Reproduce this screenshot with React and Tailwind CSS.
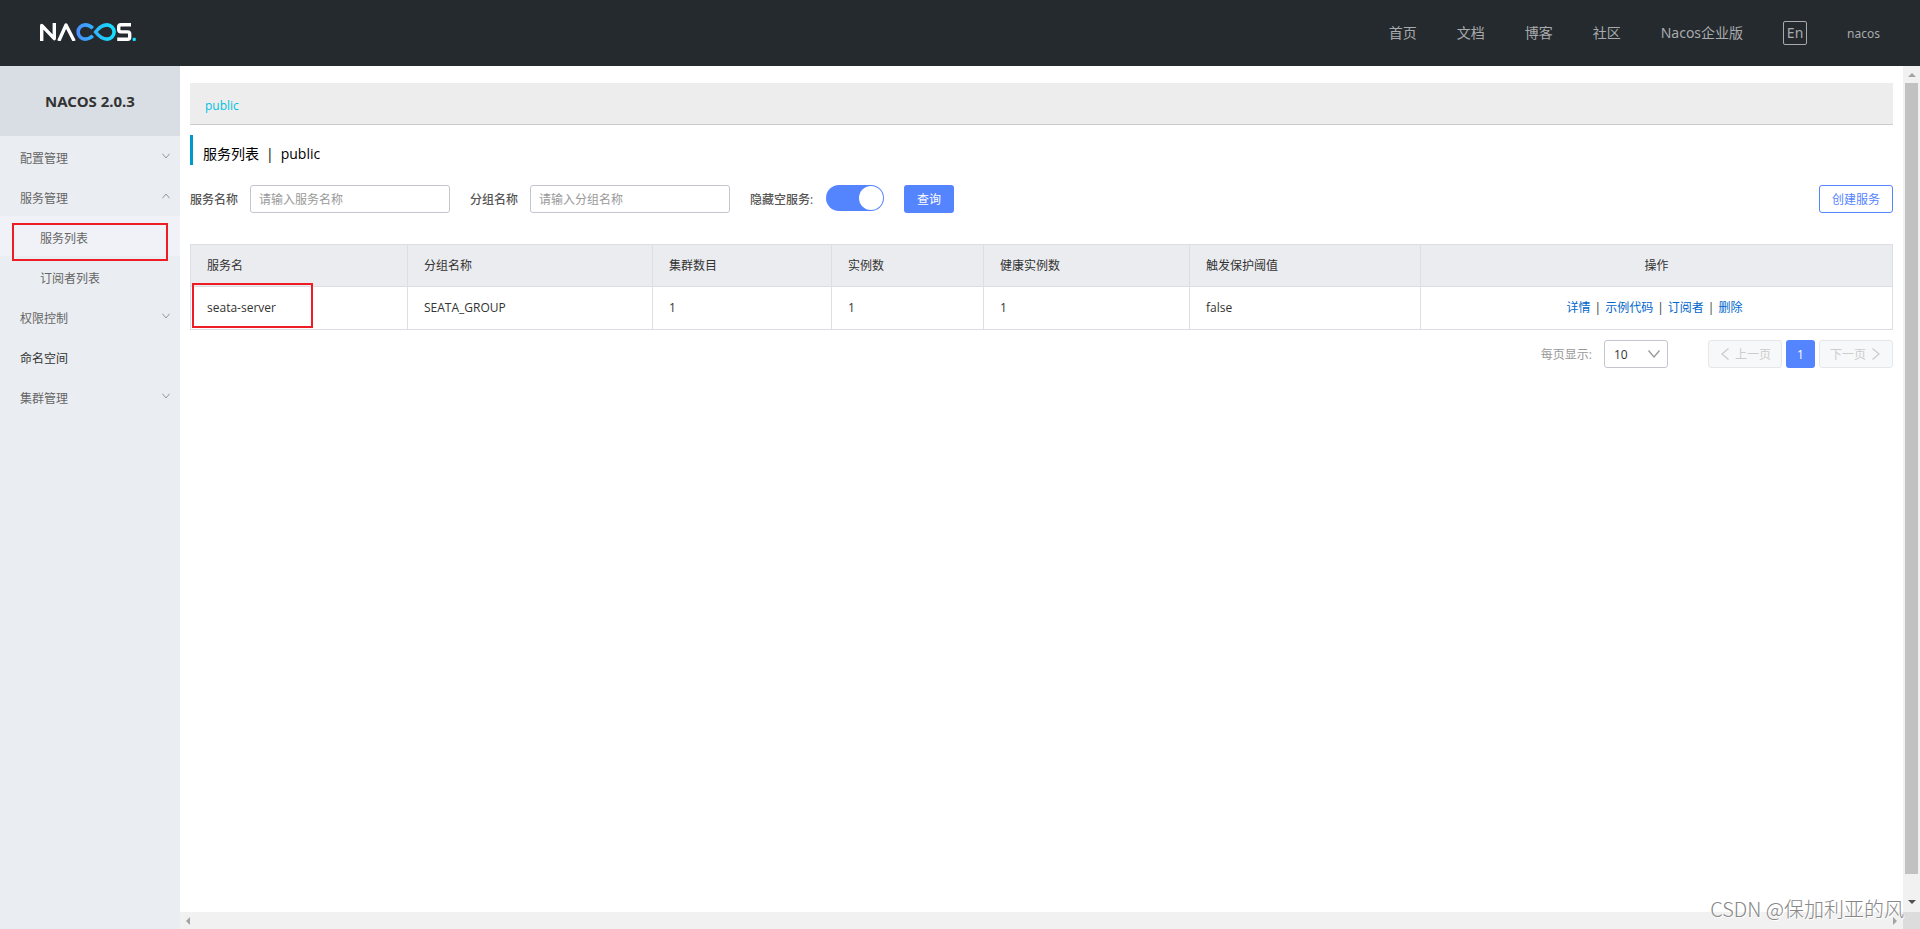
import React, { useState } from "react";

const NAV = ["首页", "文档", "博客", "社区", "Nacos企业版"];

const COLUMNS = [
  { label: "服务名", width: "w-[217px]" },
  { label: "分组名称", width: "w-[245px]" },
  { label: "集群数目", width: "w-[179px]" },
  { label: "实例数", width: "w-[152px]" },
  { label: "健康实例数", width: "w-[206px]" },
  { label: "触发保护阈值", width: "w-[231px]" },
];

const ROWS = [["seata-server", "SEATA_GROUP", "1", "1", "1", "false"]];

const ACTIONS = ["详情", "示例代码", "订阅者", "删除"];

function Logo() {
  return (
    <svg viewBox="0 0 96 18" className="mb-0.5 h-[18px] w-24" fill="none" role="img" aria-label="Nacos">
      <defs>
        <linearGradient id="loop" x1="36" y1="0" x2="76" y2="0" gradientUnits="userSpaceOnUse">
          <stop offset="0" stopColor="#4a8cff" />
          <stop offset="1" stopColor="#12e4ff" />
        </linearGradient>
      </defs>
      <g stroke="#fff" strokeWidth="3.4" strokeLinejoin="round">
        <path d="M1.7 18V2.4L14.3 15.6V0" />
        <path d="M18.8 18L26 2L34.2 18" />
        <path d="M91 1.7H81Q78.7 1.7 78.7 4V6.6Q78.7 8.9 81 8.9H87.6Q89.7 8.9 89.7 11V14Q89.7 16.3 87.6 16.3H77.2" />
      </g>
      <g stroke="url(#loop)" strokeWidth="3.6">
        <path d="M52.8 5.2Q49.4 1.9 45.2 1.9A7.1 7.1 0 0 0 45.2 16.1Q49.4 16.1 52.8 12.8" />
        <path d="M55.6 9Q61 1.9 67 1.9A7.1 7.1 0 0 1 67 16.1Q61 16.1 55.6 9Z" />
      </g>
      <rect x="92.6" y="14.8" width="3.2" height="3.2" rx="1" fill="#12e4ff" />
    </svg>
  );
}

function Chevron({ dir, className }) {
  const paths = {
    down: "M.5 2.5L6 9L11.5 2.5",
    up: "M.5 9.5L6 3L11.5 9.5",
    left: "M9.5 .5L3 6L9.5 11.5",
    right: "M2.5 .5L9 6L2.5 11.5",
  };
  return (
    <svg
      viewBox="0 0 12 12"
      className={className}
      fill="none"
      stroke="currentColor"
      strokeWidth="1.3"
      aria-hidden="true"
    >
      <path d={paths[dir]} />
    </svg>
  );
}

function MenuItem({ label, dir, dark }) {
  return (
    <button
      type="button"
      className={`flex h-10 w-full items-center justify-between pt-1.5 pr-2.5 pl-5 text-left ${dark ? "text-[#333]" : "text-[#666]"}`}
    >
      {label}
      {dir && <Chevron dir={dir} className="mb-1.5 size-2 text-[#888]" />}
    </button>
  );
}

function SubItem({ label, active }) {
  return (
    <a href="#" className={`relative flex h-10 items-center pt-1.5 pl-10 text-[#666] ${active ? "bg-[#f1f2f7]" : ""}`}>
      {label}
      {active && <span className="absolute top-[7px] right-3 left-3 h-[38px] border-2 border-[#ee1c25]" />}
    </a>
  );
}

function Field({ id, label, placeholder }) {
  return (
    <div className="flex items-center gap-3">
      <label htmlFor={id} className="pt-px font-medium text-[#555]">
        {label}
      </label>
      <input
        id={id}
        placeholder={placeholder}
        className="h-7 w-[200px] rounded-[3px] border border-[#c4c6cf] px-2 pt-px text-[#333] outline-none placeholder:text-[#999]"
      />
    </div>
  );
}

function Arrow({ points, className }) {
  return (
    <svg viewBox="0 0 8 8" className={`size-2 ${className}`} fill="currentColor" aria-hidden="true">
      <polygon points={points} />
    </svg>
  );
}

export default function App() {
  const [hideEmpty, setHideEmpty] = useState(true);
  return (
    <div className="flex h-screen flex-col overflow-hidden bg-white font-['Open_Sans','Noto_Sans_CJK_SC',sans-serif] text-xs text-[#333]">
      <header className="flex h-[66px] shrink-0 items-center justify-between bg-[#252a2f] px-10 font-['Noto_Sans','Noto_Sans_CJK_SC',sans-serif]">
        <a href="#">
          <Logo />
        </a>
        <nav className="flex items-center gap-10 text-sm text-[#a8aaac]">
          {NAV.map((n) => (
            <a key={n} href="#">
              {n}
            </a>
          ))}
          <button type="button" className="h-6 w-6 rounded-xs border border-[#a8aaac] text-center leading-5">
            En
          </button>
          <a href="#" className="pt-0.5 text-xs">
            nacos
          </a>
        </nav>
      </header>

      <div className="flex min-h-0 flex-1">
        <aside className="w-[180px] shrink-0 bg-[#eaedf1]">
          <h1 className="flex h-[70px] items-center justify-center bg-[#d9dde4] font-['Noto_Sans',sans-serif] text-[15px] font-bold">
            NACOS 2.0.3
          </h1>
          <nav>
            <MenuItem label="配置管理" dir="down" />
            <MenuItem label="服务管理" dir="up" />
            <SubItem label="服务列表" active />
            <SubItem label="订阅者列表" />
            <MenuItem label="权限控制" dir="down" />
            <MenuItem label="命名空间" dark />
            <MenuItem label="集群管理" dir="down" />
          </nav>
        </aside>

        <div className="flex min-w-0 flex-1 flex-col">
          <div className="flex min-h-0 flex-1">
            <main className="min-w-0 flex-1 px-2.5 pt-[17px]">
              <div className="flex h-[42px] items-center border-b border-[#ccc] bg-[#ededed] pt-1 pl-[15px]">
                <a href="#" className="text-[#00c1de]">
                  public
                </a>
              </div>
              <h2 className="mt-2.5 flex h-[30px] items-center gap-[7px] border-l-3 border-[#09c] pt-2 pl-2.5 text-sm text-black">
                <span>服务列表</span>
                <span>|</span>
                <span>public</span>
              </h2>

              <form className="mt-5 flex items-center gap-5" onSubmit={(e) => e.preventDefault()}>
                <Field id="service" label="服务名称" placeholder="请输入服务名称" />
                <Field id="group" label="分组名称" placeholder="请输入分组名称" />
                <div className="flex items-center gap-3">
                  <label htmlFor="hide" className="w-16 pt-px font-medium whitespace-nowrap text-[#555]">
                    隐藏空服务:
                  </label>
                  <input
                    id="hide"
                    type="checkbox"
                    role="switch"
                    checked={hideEmpty}
                    onChange={(e) => setHideEmpty(e.target.checked)}
                    className="mb-0.5 flex h-[26px] w-[58px] appearance-none items-center rounded-full bg-[#c4c6cf] p-px before:size-6 before:rounded-full before:bg-white checked:justify-end checked:bg-[#5584ff]"
                  />
                </div>
                <button type="submit" className="h-7 w-[50px] rounded-[3px] bg-[#5584ff] pt-px text-white">
                  查询
                </button>
                <button
                  type="button"
                  className="ml-auto h-7 w-[74px] rounded-[3px] border border-[#5584ff] pt-px text-[#5584ff]"
                >
                  创建服务
                </button>
              </form>

              <div className="relative mt-[31px]">
                <table className="w-full table-fixed border-collapse text-left">
                  <thead>
                    <tr className="h-[42px] bg-[#ebecf0]">
                      {COLUMNS.map((c) => (
                        <th key={c.label} className={`border border-[#dcdee3] px-4 font-normal ${c.width}`}>
                          {c.label}
                        </th>
                      ))}
                      <th className="border border-[#dcdee3] px-4 text-center font-normal">操作</th>
                    </tr>
                  </thead>
                  <tbody>
                    {ROWS.map((r) => (
                      <tr key={r[0]} className="h-[43px]">
                        {r.map((v, i) => (
                          <td key={i} className="border border-[#dcdee3] px-4">
                            {v}
                          </td>
                        ))}
                        <td className="border border-[#dcdee3] pr-5 pl-4">
                          <div className="flex justify-center gap-1">
                            {ACTIONS.map((a, i) => (
                              <React.Fragment key={a}>
                                {i > 0 && <span>|</span>}
                                <a href="#" className="text-[#06c]">
                                  {a}
                                </a>
                              </React.Fragment>
                            ))}
                          </div>
                        </td>
                      </tr>
                    ))}
                  </tbody>
                </table>
                <span className="absolute top-[39px] left-0.5 h-[45px] w-[121px] border-2 border-[#ee1c25]" />
              </div>

              <div className="mt-2.5 flex items-center justify-end">
                <label htmlFor="size" className="pt-px text-[#999]">
                  每页显示:
                </label>
                <div className="relative ml-3">
                  <select
                    id="size"
                    className="h-7 w-16 appearance-none rounded-[3px] border border-[#c4c6cf] bg-white pt-px pl-[9px]"
                  >
                    <option>10</option>
                    <option>20</option>
                  </select>
                  <Chevron dir="down" className="pointer-events-none absolute top-2 right-2 size-3 text-[#999]" />
                </div>
                <div className="ml-10 flex gap-1">
                  <button
                    type="button"
                    disabled
                    className="flex h-7 w-[74px] items-center justify-center gap-1 rounded-[3px] border border-[#e6e7eb] bg-[#f7f8fa] text-[#ccc]"
                  >
                    <Chevron dir="left" className="size-3" />
                    <span className="pt-px">上一页</span>
                  </button>
                  <button type="button" className="h-7 w-[29px] rounded-[3px] bg-[#5584ff] pt-px text-white">
                    1
                  </button>
                  <button
                    type="button"
                    disabled
                    className="flex h-7 w-[74px] items-center justify-center gap-1 rounded-[3px] border border-[#e6e7eb] bg-[#f7f8fa] text-[#ccc]"
                  >
                    <span className="pt-px">下一页</span>
                    <Chevron dir="right" className="size-3" />
                  </button>
                </div>
              </div>
            </main>

            <div className="flex w-[17px] shrink-0 flex-col items-center bg-[#f1f1f1]" aria-hidden="true">
              <div className="flex h-[17px] items-center">
                <Arrow points="4,2 8,6 0,6" className="text-[#a3a3a3]" />
              </div>
              <div className="w-[13px] flex-1 bg-[#c1c1c1]" />
              <div className="flex h-[38px] items-end pb-1.5">
                <Arrow points="0,2 8,2 4,6" className="text-[#505050]" />
              </div>
            </div>
          </div>

          <div className="flex h-[17px] shrink-0 bg-[#f1f1f1]" aria-hidden="true">
            <div className="flex flex-1 items-center justify-between px-1">
              <Arrow points="6,0 6,8 2,4" className="text-[#a3a3a3]" />
              <Arrow points="2,0 6,4 2,8" className="text-[#a3a3a3]" />
            </div>
            <div className="w-[17px] bg-[#dcdcdc]" />
          </div>
        </div>
      </div>

      <p className="pointer-events-none absolute right-4 bottom-2 font-['Noto_Sans_CJK_SC',sans-serif] text-xl leading-6 font-light text-[#888] [text-shadow:1px_1px_0_#fff]">
        CSDN @保加利亚的风
      </p>
    </div>
  );
}
